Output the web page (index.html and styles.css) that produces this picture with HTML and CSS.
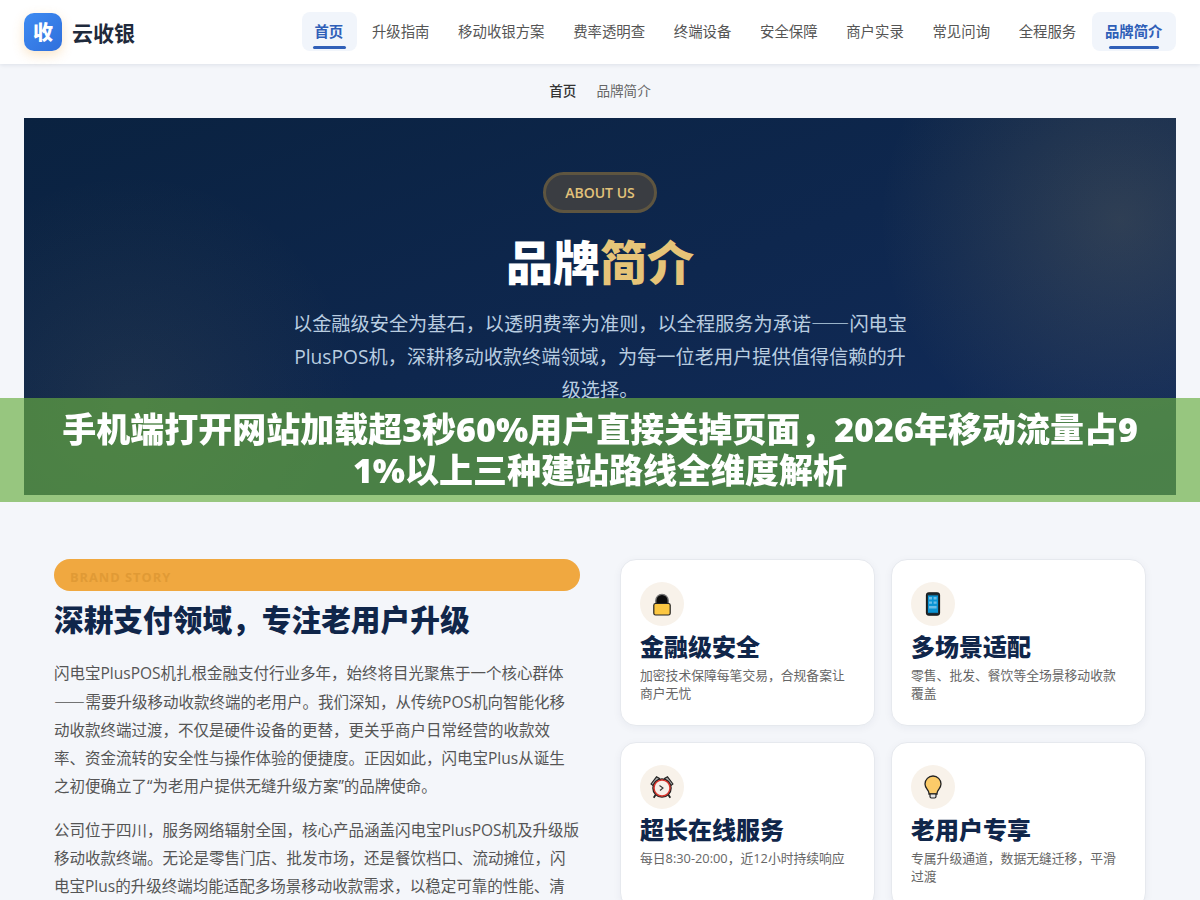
FILE: index.html
```html
<!DOCTYPE html>
<html lang="zh-CN">
<head>
<meta charset="utf-8">
<title>品牌简介</title>
<link rel="stylesheet" href="styles.css">
</head>
<body>
<header class="topbar">
  <a class="brand"><span class="brand-mark">收</span><span class="brand-name">云收银</span></a>
  <nav class="nav">
    <a class="nav-item active">首页</a>
    <a class="nav-item">升级指南</a>
    <a class="nav-item">移动收银方案</a>
    <a class="nav-item">费率透明查</a>
    <a class="nav-item">终端设备</a>
    <a class="nav-item">安全保障</a>
    <a class="nav-item">商户实录</a>
    <a class="nav-item">常见问询</a>
    <a class="nav-item">全程服务</a>
    <a class="nav-item active">品牌简介</a>
  </nav>
</header>
<div class="crumbs"><a class="crumb-home">首页</a><span class="crumb-here">品牌简介</span></div>
<section class="hero">
  <span class="hero-tag">ABOUT US</span>
  <h1 class="hero-title">品牌<span class="gold">简介</span></h1>
  <p class="hero-text">以金融级安全为基石，以透明费率为准则，以全程服务为承诺<span class="cjk">——</span>闪电宝PlusPOS机，深耕移动收款终端领域，为每一位老用户提供值得信赖的升级选择。</p>
</section>
<main class="story">
  <div class="story-left">
    <div class="story-tag">BRAND STORY</div>
    <h2 class="story-title">深耕支付领域，专注老用户升级</h2>
    <p class="story-text">闪电宝PlusPOS机扎根金融支付行业多年，始终将目光聚焦于一个核心群体<span class="cjk dash">——</span>需要升级移动收款终端的老用户。我们深知，从传统POS机向智能化移动收款终端过渡，不仅是硬件设备的更替，更关乎商户日常经营的收款效率、资金流转的安全性与操作体验的便捷度。正因如此，闪电宝Plus从诞生之初便确立了“为老用户提供无缝升级方案”的品牌使命。</p>
    <p class="story-text">公司位于四川，服务网络辐射全国，核心产品涵盖闪电宝PlusPOS机及升级版移动收款终端。无论是零售门店、批发市场，还是餐饮档口、流动摊位，闪电宝Plus的升级终端均能适配多场景移动收款需求，以稳定可靠的性能、清晰透明的费率赢得商户信赖。</p>
  </div>
  <div class="cards">
    <article class="card">
      <div class="card-icon">
        <svg viewBox="0 0 24 24" width="24" height="24"><path d="M5.800 13V8.500a6.200 6.200 0 0 1 12.400 0V13z" fill="#0c0c0c" stroke="#777" stroke-width="1.300"/><rect x="3.800" y="11.500" width="16.400" height="11.500" rx="1.800" fill="#fcc742" stroke="#222" stroke-width="1.200"/></svg>
      </div>
      <h3 class="card-title">金融级安全</h3>
      <p class="card-text">加密技术保障每笔交易，合规备案让商户无忧</p>
    </article>
    <article class="card">
      <div class="card-icon">
        <svg viewBox="0 0 24 24" width="24" height="24"><rect x="5.400" y="0.800" width="13.200" height="22.400" rx="2" fill="#1c2b33" stroke="#111" stroke-width="1"/><rect x="7" y="3.400" width="10" height="17.400" fill="#0b94d4"/><path d="M8 5h3v2.400H8zM12.600 5h3v2.400h-3zM8 9.400h3v2.400H8zM12.600 9.400h3v2.400h-3zM8 14h7.600v2.400H8z" fill="#6cbde6"/></svg>
      </div>
      <h3 class="card-title">多场景适配</h3>
      <p class="card-text">零售、批发、餐饮等全场景移动收款覆盖</p>
    </article>
    <article class="card">
      <div class="card-icon">
        <svg viewBox="0 0 24 24" width="24" height="24"><path d="M1 9 6.500 1.800l3 1.700L3 10.500z" fill="#a8a8a8" stroke="#222" stroke-width="1.100"/><path d="M23 9 17.500 1.800l-3 1.700L21 10.500z" fill="#a8a8a8" stroke="#222" stroke-width="1.100"/><path d="M5.500 20l-1.800 2.800M18.500 20l1.800 2.800" stroke="#222" stroke-width="1.800"/><circle cx="12" cy="13" r="9" fill="#f7efe9" stroke="#222" stroke-width="1.600"/><circle cx="12" cy="13" r="8" fill="none" stroke="#d8342c" stroke-width="1.500"/><path d="M9.500 10.500l3.500 2.500-3 2.500" fill="none" stroke="#333" stroke-width="1.100"/></svg>
      </div>
      <h3 class="card-title">超长在线服务</h3>
      <p class="card-text">每日8:30-20:00，近12小时持续响应</p>
    </article>
    <article class="card">
      <div class="card-icon">
        <svg viewBox="0 0 24 24" width="24" height="24"><path d="M12 1a8 8 0 0 0-8 8c0 3.200 2.200 4.800 3.400 7.200.5 1 .6 1.800.6 2.800h8c0-1 .1-1.800.6-2.800C17.800 13.800 20 12.200 20 9a8 8 0 0 0-8-8z" fill="#fbcb69" stroke="#222" stroke-width="1.300"/><path d="M9 19h6v2.500a1.500 1.500 0 0 1-1.500 1.500h-3A1.500 1.500 0 0 1 9 21.500z" fill="#e4e4e4" stroke="#222" stroke-width="1.200"/></svg>
      </div>
      <h3 class="card-title">老用户专享</h3>
      <p class="card-text">专属升级通道，数据无缝迁移，平滑过渡</p>
    </article>
  </div>
</main>
<aside class="notice">手机端打开网站加载超3秒60%用户直接关掉页面，2026年移动流量占91%以上三种建站路线全维度解析</aside>
</body>
</html>
```
FILE: styles.css
```css
* { box-sizing: border-box; }
html, body { margin: 0; padding: 0; }
body {
  background: #f4f6fa;
  color: #10264a;
  font-family: "Open Sans", "Noto Sans CJK SC", sans-serif;
}
.cjk { font-family: "Noto Sans CJK SC", sans-serif; }
.dash { letter-spacing: .6px; }
.topbar {
  height: 64px;
  background: #fff;
  display: flex;
  align-items: center;
  justify-content: space-between;
  padding: 0 24px 1px;
  box-shadow: 0 1px 4px rgba(15, 42, 82, .1);
}
.brand { display: flex; align-items: center; gap: 10px; }
.brand-mark {
  width: 38px;
  height: 38px;
  border-radius: 10px;
  background: linear-gradient(135deg, #3f8cf2, #2f6fdc);
  box-shadow: 0 4px 12px rgba(240, 170, 70, .3);
  color: #fff;
  font-size: 20px;
  font-weight: 800;
  display: flex;
  align-items: center;
  justify-content: center;
}
.brand-name { font-size: 21px; font-weight: 700; color: #1f2a3c; }
.nav { display: flex; gap: 2.670px; }
.nav-item {
  position: relative;
  height: 39px;
  padding: 0 13.500px 0 12.500px;
  font-size: 14.400px;
  line-height: 39px;
  color: #555;
  border-radius: 8px;
}
.nav-item.active { background: #f1f5fb; color: #2f5fb8; font-weight: 600; }
.nav-item.active::after {
  content: "";
  position: absolute;
  left: 20%;
  bottom: 2px;
  width: 60%;
  height: 3px;
  border-radius: 2px;
  background: #2f5fb8;
}
.crumbs {
  height: 54px;
  padding-bottom: 2px;
  display: flex;
  align-items: center;
  justify-content: center;
  gap: 20px;
  font-size: 13.600px;
}
.crumb-home { color: #333; font-weight: 500; }
.crumb-here { color: #666; }
.hero {
  margin: 0 24px;
  height: 377px;
  padding-top: 54px;
  background:
    radial-gradient(circle 240px at 1096px 102px, rgba(205, 175, 100, .17), transparent),
    radial-gradient(circle 230px at 105px 285px, rgba(205, 175, 100, .08), transparent),
    linear-gradient(160deg, #0a2240, #122c5c);
  text-align: center;
  overflow: hidden;
}
.hero-tag {
  display: inline-block;
  height: 41px;
  line-height: 36px;
  padding: 0 19px;
  border: 3px solid #5e5540;
  border-radius: 21px;
  background: #3a3d42;
  color: #e2c27a;
  font-size: 14px;
  font-weight: 600;
}
.hero-title {
  margin: 18px 0 0;
  font-size: 47px;
  line-height: 62px;
  font-weight: 900;
  color: #fff;
}
.gold { color: #e6c478; }
.hero-text {
  width: 630px;
  margin: 14px auto 0;
  font-size: 19.200px;
  line-height: 33px;
  color: #b9cde0;
}
.story {
  display: grid;
  grid-template-columns: 526px 526px;
  gap: 40px;
  padding: 64px 54px 40px;
}
.story-tag {
  height: 32px;
  padding: 0 16px;
  border-radius: 16px;
  background: #f0a840;
  color: #e09a35;
  font-size: 12.800px;
  font-weight: 700;
  line-height: 36px;
  letter-spacing: 1px;
}
.story-title {
  margin: 9px 0 19px;
  font-size: 29.700px;
  line-height: 40px;
  font-weight: 800;
  color: #10264a;
}
.story-text {
  margin: 0 0 16px;
  font-size: 15.500px;
  line-height: 28px;
  color: #555;
}
.cards {
  display: grid;
  grid-template-columns: 255px 255px;
  grid-auto-rows: 167px;
  gap: 16px;
}
.card {
  background: #fff;
  border: 1px solid #e6e9ee;
  border-radius: 16px;
  padding: 22px 19px;
  box-shadow: 0 2px 8px rgba(15, 42, 82, .05);
}
.card-icon {
  width: 44px;
  height: 44px;
  border-radius: 50%;
  background: #f8f2ea;
  display: flex;
  align-items: center;
  justify-content: center;
}
.card-title {
  margin: 3px 0 1px;
  font-size: 24px;
  line-height: 36px;
  font-weight: 800;
  color: #10264a;
}
.card-text {
  margin: 0;
  font-size: 12.800px;
  line-height: 18px;
  color: #666;
}
.notice {
  position: fixed;
  left: 0;
  right: 0;
  top: 398px;
  height: 104px;
  padding: 11px 56px 0;
  background: rgba(104, 174, 65, .664);
  color: #fff;
  font-size: 34px;
  font-weight: 800;
  line-height: 41px;
  text-align: center;
  word-break: break-all;
}
```
